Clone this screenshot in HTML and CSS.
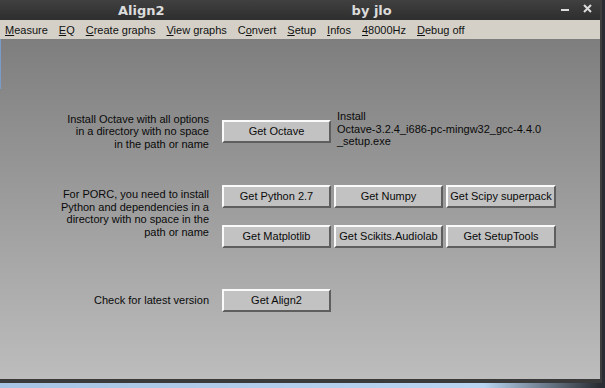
FILE: index.html
```html
<!DOCTYPE html>
<html>
    <head>
        <meta charset="utf-8">
        <title>Align2</title>
        <link rel="stylesheet" href="styles.css">
    </head>
    <body>
        <div class="window">
            <div class="titlebar">
                <span class="title">Align2</span>
                <span class="author">by jlo</span>
                <svg class="wbtn" width="8" height="20" viewBox="0 0 8 20"><rect x="0" y="9" width="8" height="2" fill="#dcdcdc"/></svg>
                <svg class="wbtn close" width="9" height="20" viewBox="0 0 9 20"><path d="M1 5 L8 12 M8 5 L1 12" stroke="#dcdcdc" stroke-width="2"/></svg>
            </div>
            <div class="menubar">
                <span class="menu"><u>M</u>easure</span>
                <span class="menu"><u>E</u>Q</span>
                <span class="menu"><u>C</u>reate graphs</span>
                <span class="menu"><u>V</u>iew graphs</span>
                <span class="menu">C<u>o</u>nvert</span>
                <span class="menu"><u>S</u>etup</span>
                <span class="menu"><u>I</u>nfos</span>
                <span class="menu"><u>4</u>8000Hz</span>
                <span class="menu"><u>D</u>ebug off</span>
            </div>
            <div class="content">
                <div class="row octave">
                    <div class="label">Install Octave with all options<br>in a directory with no space<br>in the path or name</div>
                    <div class="btn">Get Octave</div>
                    <div class="note">Install<br>Octave-3.2.4_i686-pc-mingw32_gcc-4.4.0<br>_setup.exe</div>
                </div>
                <div class="row porc">
                    <div class="label">For PORC, you need to install<br>Python and dependencies in a<br>directory with no space in the<br>path or name</div>
                    <div class="btngrid">
                        <div class="btn">Get Python 2.7</div>
                        <div class="btn">Get Numpy</div>
                        <div class="btn">Get Scipy superpack</div>
                        <div class="btn">Get Matplotlib</div>
                        <div class="btn">Get Scikits.Audiolab</div>
                        <div class="btn">Get SetupTools</div>
                    </div>
                </div>
                <div class="row latest">
                    <div class="label">Check for latest version</div>
                    <div class="btn">Get Align2</div>
                </div>
            </div>
        </div>
    </body>
</html>
```

FILE: styles.css
```css
*{
    margin: 0px;
    padding: 0px;
}
body{
    width: 605px;
    height: 388px;
    overflow: hidden;
    background: linear-gradient(90deg, #a8c4e4 0%, #b8d4f0 80%, #2a2e34 99%);
    font-family: "Liberation Sans", Arial, sans-serif;
}
.window{
    width: 600px;
    height: 379px;
    border-right: 2px solid #3e3e3e;
    border-bottom: 4px solid #3a3a3a;
    background-color: #808080;
}
.titlebar{
    height: 20px;
    background: linear-gradient(#404040, #2e2e2e);
    display: flex;
    align-items: center;
    font-family: "DejaVu Sans", sans-serif;
    font-weight: bold;
    font-size: 13px;
    color: #dcdcdc;
}
.title{
    margin-left: 118px;
}
.author{
    margin-left: 187px;
    flex: 1;
}
.wbtn{
    display: block;
    margin-right: 14px;
}
.wbtn.close{
    margin-right: 8px;
}
.menubar{
    height: 19px;
    background-color: #d4d0c8;
    display: flex;
    align-items: center;
    padding-left: 5px;
    gap: 11px;
    font-size: 11px;
    color: #111;
}
.content{
    height: 340px;
    background:
        linear-gradient(90deg, #7a9cc8 1px, transparent 1px) 0 0 / 100% 50px no-repeat,
        linear-gradient(#7e7e7e, #bdbdbd);
    padding-top: 81px;
    box-sizing: border-box;
    font-size: 11px;
    color: #0a0a0a;
}
.row{
    display: flex;
    align-items: center;
}
.octave{
    height: 23px;
}
.label{
    width: 209px;
    margin-right: 13px;
    text-align: right;
    line-height: 12.5px;
}
.btn{
    flex: none;
    width: 105px;
    height: 19px;
    line-height: 19px;
    text-align: center;
    background-color: #c2c2c2;
    border-top: 2px solid #fafafa;
    border-left: 2px solid #fafafa;
    border-bottom: 2px solid #5e5e5e;
    border-right: 2px solid #5e5e5e;
}
.note{
    margin-left: 6px;
    margin-bottom: 5px;
    line-height: 12.5px;
}
.porc{
    margin-top: 42px;
    align-items: flex-start;
}
.porc .label{
    padding-top: 3px;
}
.btngrid{
    display: grid;
    grid-template-columns: 109px 109px 110px;
    column-gap: 3px;
    row-gap: 17px;
}
.btngrid .btn:nth-child(3n){
    width: 106px;
}
.latest{
    margin-top: 41px;
}
```
